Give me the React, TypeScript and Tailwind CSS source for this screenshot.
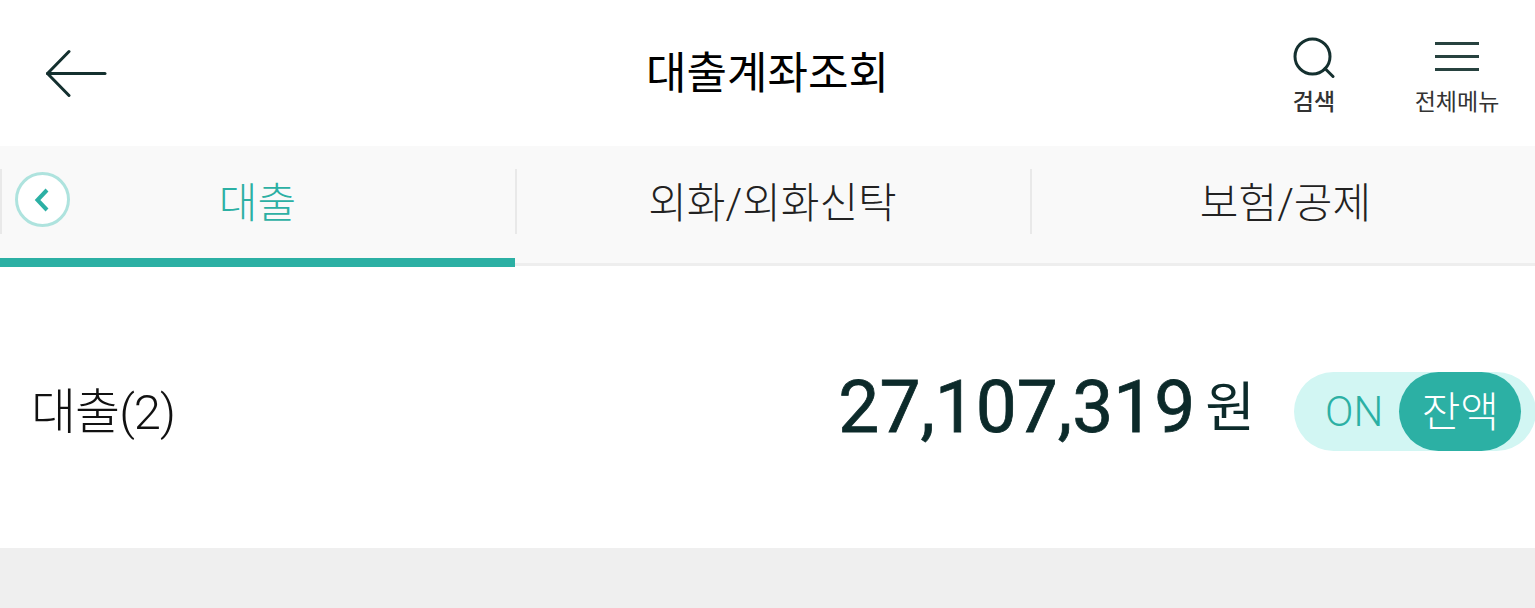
import React from "react";

const font = { sans: "font-['Roboto','Noto_Sans_CJK_KR',sans-serif]" };

const tabs = [
  { label: "대출", active: true, width: "w-[515px]", pad: "" },
  { label: "외화/외화신탁", active: false, width: "w-[515px]", pad: "" },
  { label: "보험/공제", active: false, width: "w-[505px]", pad: "pl-[6px]" },
];

const App = () => {
  return (
    <div className={`w-[1535px] h-[608px] overflow-hidden bg-white flex flex-col ${font.sans}`}>
      {/* Header */}
      <header className="h-[146px] flex items-center relative shrink-0">
        <button className="ml-[46px] mb-[1px]">
          <svg width="62" height="48" viewBox="0 0 62 48" fill="none" stroke="#14302f" strokeWidth="3" strokeLinecap="round" strokeLinejoin="round">
            <path d="M1.5 24.5H59" />
            <path d="M23 2.5L1.5 24.5L23 46.5" />
          </svg>
        </button>
        <h1 className="absolute left-0 right-0 top-[45px] text-center text-[44px] leading-[58px] font-normal text-black">
          대출계좌조회
        </h1>
        <div className="ml-auto flex items-start pt-[37px] self-start">
          <div className="w-[60px] mr-[71px] flex flex-col items-center">
            <svg width="42" height="42" viewBox="0 0 42 42" fill="none" stroke="#14302f" strokeWidth="3" strokeLinecap="round">
              <circle cx="19.5" cy="19.5" r="17.5" />
              <path d="M32 31.5L40 39.5" />
            </svg>
            <span className="mt-[9px] text-[23px] leading-[30px] font-medium text-[#333] whitespace-nowrap">검색</span>
          </div>
          <div className="w-[84px] mr-[36px] flex flex-col items-center">
            <div className="h-[42px] pt-[5px] flex flex-col gap-[10px]">
              <div className="w-[44px] h-[3px] bg-[#27423f]" />
              <div className="w-[44px] h-[3px] bg-[#27423f]" />
              <div className="w-[44px] h-[3px] bg-[#27423f]" />
            </div>
            <span className="mt-[9px] text-[23px] leading-[30px] text-[#333] whitespace-nowrap">전체메뉴</span>
          </div>
        </div>
      </header>

      {/* Tabs */}
      <nav className="h-[120px] shrink-0 bg-[#f9f9f9] flex relative">
        {tabs.map((tab, i) => (
          <div
            key={tab.label}
            className={`${tab.width} ${tab.pad} relative flex items-start justify-center pt-[31px] border-b-[3px] border-[#eeeeee]`}
          >
            <span className={`text-[42px] leading-[54px] font-light whitespace-nowrap ${tab.active ? "text-[#2cb0a4]" : "text-[#222]"}`}>
              {tab.label}
            </span>
            <div className="absolute left-0 top-[23px] w-[2px] h-[65px] bg-[#e9e9e9]" />
            {i === 0 && <div className="absolute left-0 right-0 -bottom-[4px] h-[9px] bg-[#2cb0a4]" />}
          </div>
        ))}
        <div className="absolute left-[15px] top-[26px] w-[55px] h-[55px] rounded-full border-[3px] border-[#aee3de] bg-white flex items-center justify-center">
          <svg className="mr-[2px]" width="18" height="26" viewBox="0 0 18 26" fill="none" stroke="#2cb0a4" strokeWidth="4">
            <path d="M14 3L4.5 13L14 23" />
          </svg>
        </div>
      </nav>

      {/* Summary */}
      <section className="flex-1 bg-white flex items-center pl-[31px] pt-[9px]">
        <span className="mt-[3px] text-[49px] leading-[60px] font-light text-[#111] tracking-[-1px]">대출(2)</span>
        <div className="ml-auto flex items-center">
          <span className="mt-[-9px] text-[73px] leading-[84px] text-[#0c2a2a] font-normal [-webkit-text-stroke:0.8px_#0c2a2a]">27,107,319</span>
          <span className="ml-[10px] mt-[-5px] text-[54px] leading-[60px] text-[#0c2a2a] font-normal">원</span>
          <div className="ml-[39px] mr-[-1px] w-[242px] h-[79px] rounded-full bg-[#d2f6f3] flex items-center">
            <span className="ml-[31px] mt-[1px] text-[42px] leading-[50px] font-light text-[#2cb0a4]">ON</span>
            <div className="ml-[16px] pt-[3px] w-[122px] h-[79px] rounded-full bg-[#2cb0a4] flex items-center justify-center text-[42px] leading-[50px] font-light text-white">
              잔액
            </div>
          </div>
        </div>
      </section>

      {/* Bottom area */}
      <div className="h-[60px] shrink-0 bg-[#efefef]" />
    </div>
  );
};

export default App;
